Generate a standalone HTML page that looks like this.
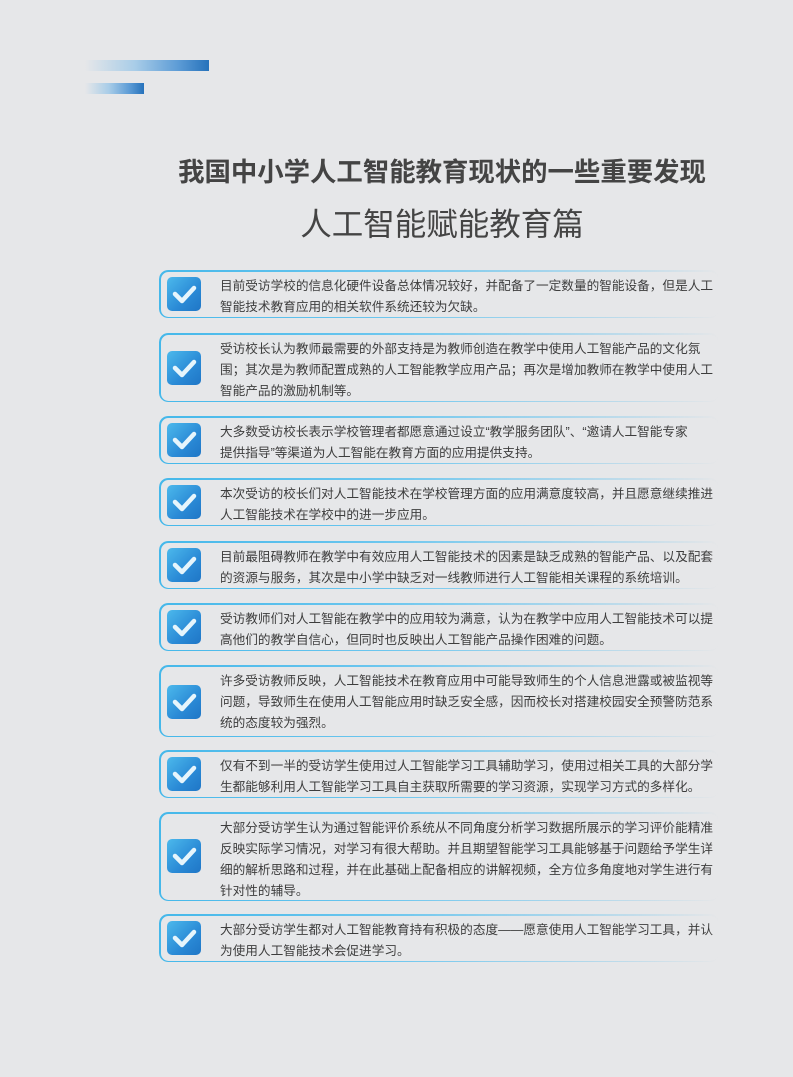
<!DOCTYPE html>
<html><head><meta charset="utf-8"><style>
*{margin:0;padding:0;box-sizing:border-box}
body{width:793px;height:1077px;background:#e6e7e9;position:relative;overflow:hidden;font-family:"Liberation Sans","Noto Sans CJK SC",sans-serif;color:#3a3a3a}
.bar{position:absolute;height:11px}
h1{position:absolute;top:150px;left:0;width:884px;text-align:center;font-size:26.4px;font-weight:bold;color:#444;letter-spacing:0}
h2{position:absolute;top:199px;left:0;width:884px;text-align:center;font-size:31.5px;font-weight:normal;color:#444}
.box{position:absolute;left:159px;width:560px;border-radius:9px;}
.box::before{content:"";position:absolute;inset:0;border-radius:9px;padding:1.5px;background:linear-gradient(90deg,#45b8ea 0%,#6cc6ee 40%,rgba(160,210,235,.5) 85%,rgba(230,231,233,0) 100%);-webkit-mask:linear-gradient(#000 0 0) content-box,linear-gradient(#000 0 0);-webkit-mask-composite:xor;mask-composite:exclude}
.ic{position:absolute;left:8px;width:34px;height:34px;border-radius:5px;background:linear-gradient(135deg,#4cb9ec,#2a8ad6 60%,#1f76c6)}
.ic svg{position:absolute;left:0;top:0}
.t{position:absolute;left:61px;top:6px;width:500px;font-size:12.65px;line-height:21px;color:#3d3d3d;white-space:nowrap}
</style></head><body>
<div class="bar" style="left:85px;top:60px;width:124px;background:linear-gradient(90deg,rgba(230,231,233,0),#a9cde8 40%,#5d9cd6 75%,#2672bb)"></div>
<div class="bar" style="left:85px;top:83px;width:59px;background:linear-gradient(90deg,rgba(230,231,233,0),#a9cde8 40%,#5d9cd6 75%,#2672bb)"></div>
<h1>我国中小学人工智能教育现状的一些重要发现</h1>
<h2>人工智能赋能教育篇</h2>

<div class="box" style="top:270px;height:48px"><div class="ic" style="top:7px"><svg width="34" height="34"><path d="M8 17 L15 24 L27 11" stroke="#e6f5fc" stroke-width="4.5" fill="none" stroke-linecap="round" stroke-linejoin="round"/></svg></div><div class="t">目前受访学校的信息化硬件设备总体情况较好，并配备了一定数量的智能设备，但是人工<br>智能技术教育应用的相关软件系统还较为欠缺。</div></div>

<div class="box" style="top:333px;height:69px"><div class="ic" style="top:18px"><svg width="34" height="34"><path d="M8 17 L15 24 L27 11" stroke="#e6f5fc" stroke-width="4.5" fill="none" stroke-linecap="round" stroke-linejoin="round"/></svg></div><div class="t">受访校长认为教师最需要的外部支持是为教师创造在教学中使用人工智能产品的文化氛<br>围；其次是为教师配置成熟的人工智能教学应用产品；再次是增加教师在教学中使用人工<br>智能产品的激励机制等。</div></div>

<div class="box" style="top:416px;height:48px"><div class="ic" style="top:7px"><svg width="34" height="34"><path d="M8 17 L15 24 L27 11" stroke="#e6f5fc" stroke-width="4.5" fill="none" stroke-linecap="round" stroke-linejoin="round"/></svg></div><div class="t">大多数受访校长表示学校管理者都愿意通过设立“教学服务团队”、“邀请人工智能专家<br>提供指导”等渠道为人工智能在教育方面的应用提供支持。</div></div>

<div class="box" style="top:478px;height:48px"><div class="ic" style="top:7px"><svg width="34" height="34"><path d="M8 17 L15 24 L27 11" stroke="#e6f5fc" stroke-width="4.5" fill="none" stroke-linecap="round" stroke-linejoin="round"/></svg></div><div class="t">本次受访的校长们对人工智能技术在学校管理方面的应用满意度较高，并且愿意继续推进<br>人工智能技术在学校中的进一步应用。</div></div>

<div class="box" style="top:541px;height:48px"><div class="ic" style="top:7px"><svg width="34" height="34"><path d="M8 17 L15 24 L27 11" stroke="#e6f5fc" stroke-width="4.5" fill="none" stroke-linecap="round" stroke-linejoin="round"/></svg></div><div class="t">目前最阻碍教师在教学中有效应用人工智能技术的因素是缺乏成熟的智能产品、以及配套<br>的资源与服务，其次是中小学中缺乏对一线教师进行人工智能相关课程的系统培训。</div></div>

<div class="box" style="top:603px;height:48px"><div class="ic" style="top:7px"><svg width="34" height="34"><path d="M8 17 L15 24 L27 11" stroke="#e6f5fc" stroke-width="4.5" fill="none" stroke-linecap="round" stroke-linejoin="round"/></svg></div><div class="t">受访教师们对人工智能在教学中的应用较为满意，认为在教学中应用人工智能技术可以提<br>高他们的教学自信心，但同时也反映出人工智能产品操作困难的问题。</div></div>

<div class="box" style="top:665px;height:72px"><div class="ic" style="top:20px"><svg width="34" height="34"><path d="M8 17 L15 24 L27 11" stroke="#e6f5fc" stroke-width="4.5" fill="none" stroke-linecap="round" stroke-linejoin="round"/></svg></div><div class="t">许多受访教师反映，人工智能技术在教育应用中可能导致师生的个人信息泄露或被监视等<br>问题，导致师生在使用人工智能应用时缺乏安全感，因而校长对搭建校园安全预警防范系<br>统的态度较为强烈。</div></div>

<div class="box" style="top:750px;height:48px"><div class="ic" style="top:7px"><svg width="34" height="34"><path d="M8 17 L15 24 L27 11" stroke="#e6f5fc" stroke-width="4.5" fill="none" stroke-linecap="round" stroke-linejoin="round"/></svg></div><div class="t">仅有不到一半的受访学生使用过人工智能学习工具辅助学习，使用过相关工具的大部分学<br>生都能够利用人工智能学习工具自主获取所需要的学习资源，实现学习方式的多样化。</div></div>

<div class="box" style="top:812px;height:89px"><div class="ic" style="top:27px"><svg width="34" height="34"><path d="M8 17 L15 24 L27 11" stroke="#e6f5fc" stroke-width="4.5" fill="none" stroke-linecap="round" stroke-linejoin="round"/></svg></div><div class="t">大部分受访学生认为通过智能评价系统从不同角度分析学习数据所展示的学习评价能精准<br>反映实际学习情况，对学习有很大帮助。并且期望智能学习工具能够基于问题给予学生详<br>细的解析思路和过程，并在此基础上配备相应的讲解视频，全方位多角度地对学生进行有<br>针对性的辅导。</div></div>

<div class="box" style="top:914px;height:48px"><div class="ic" style="top:7px"><svg width="34" height="34"><path d="M8 17 L15 24 L27 11" stroke="#e6f5fc" stroke-width="4.5" fill="none" stroke-linecap="round" stroke-linejoin="round"/></svg></div><div class="t">大部分受访学生都对人工智能教育持有积极的态度——愿意使用人工智能学习工具，并认<br>为使用人工智能技术会促进学习。</div></div>
</body></html>
